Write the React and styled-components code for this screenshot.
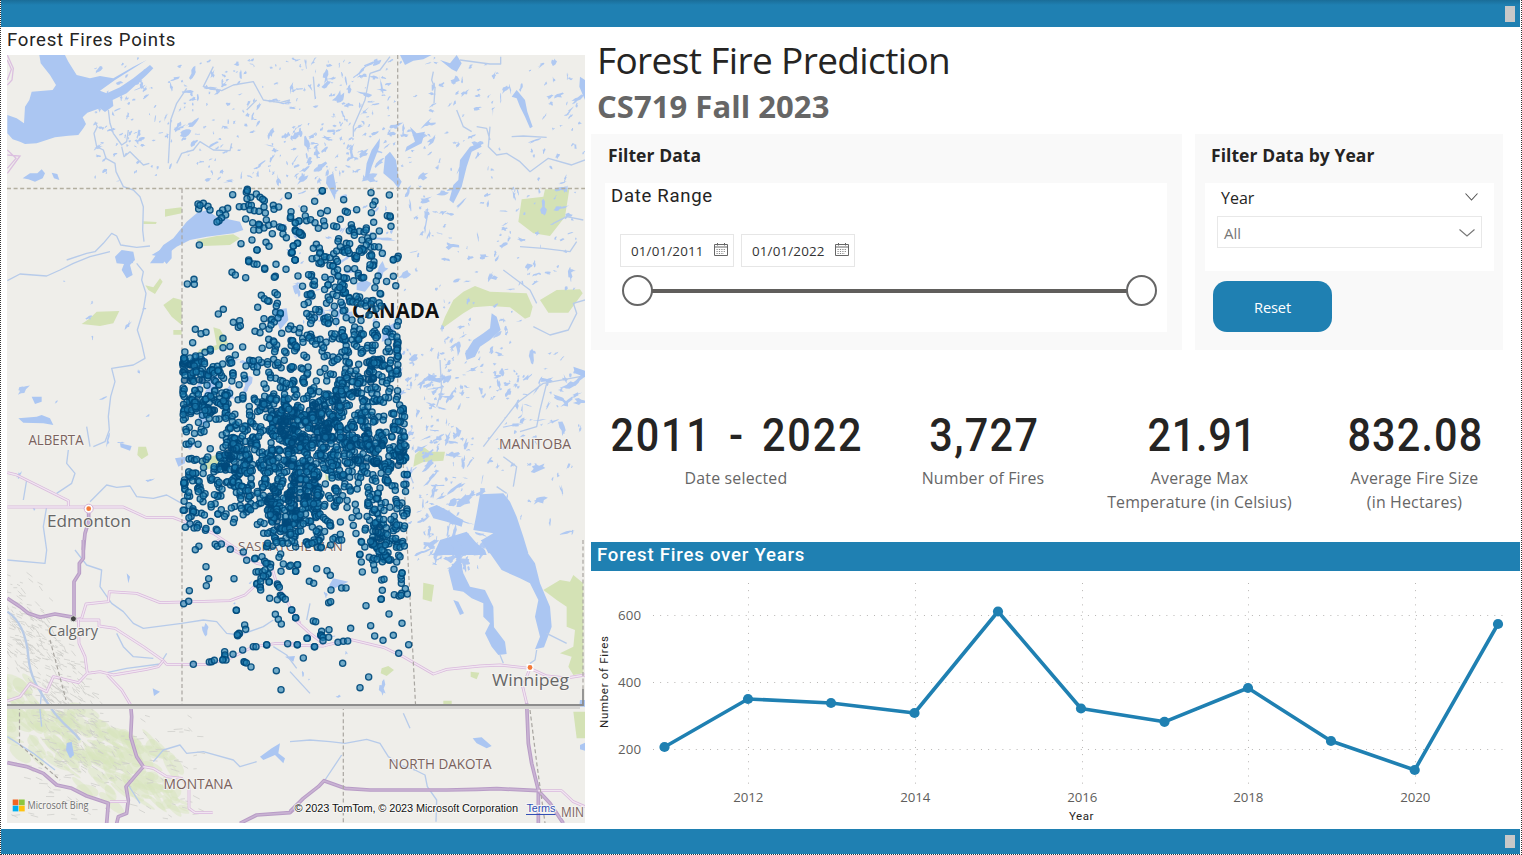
import React from "react";
import styled, { createGlobalStyle } from "styled-components";

const BLUE = "#1f80b2";
const SEGOE = '"Open Sans", "Noto Sans", sans-serif';
const DIN = 'Roboto, "Liberation Sans", sans-serif';

const GlobalStyle = createGlobalStyle`
  * { box-sizing: border-box; }
  body { margin: 0; background: #fff; overflow: hidden; }
`;

const Page = styled.div`
  width: 1522px;
  height: 855px;
  display: flex;
  flex-direction: column;
  padding-right: 1px;
  border-left: 1px dotted #333;
  border-right: 1px dotted #333;
  border-bottom: 1px dotted #333;
  background: #fff;
`;

const Bar = styled.div`
  flex: none;
  height: ${(p) => p.$height}px;
  padding: 6px 5px 0 0;
  display: flex;
  justify-content: flex-end;
  background: ${(p) => (p.$shaded ? `linear-gradient(#1a6d98, ${BLUE} 5px)` : BLUE)};
`;

const Handle = styled.span`
  width: 10px;
  height: ${(p) => p.$height}px;
  background: #c8c8c8;
`;

const Body = styled.main`
  flex: 1;
  min-height: 0;
  display: grid;
  grid-template-columns: 584px 929px;
  column-gap: 6px;
`;

const MapPanel = styled.section`
  padding-left: 6px;
  display: flex;
  flex-direction: column;
`;

const MapTitle = styled.h2`
  margin: 0;
  height: 28px;
  font: 400 18.6px/26px ${DIN};
  letter-spacing: 0.76px;
  color: #252423;
`;

const MapSvg = styled.svg`
  display: block;
  width: 578px;
  height: 768px;
`;

const Right = styled.section`
  display: flex;
  flex-direction: column;
`;

const Title = styled.h1`
  margin: 0;
  padding: 7px 0 0 6px;
  height: 55px;
  font: 400 37px/52px ${SEGOE};
  letter-spacing: -0.63px;
  color: #252423;
`;

const Subtitle = styled.p`
  margin: 0;
  padding-left: 6px;
  height: 52px;
  font: 700 31px/48px ${SEGOE};
  letter-spacing: 0.05px;
  color: #666;
`;

const Filters = styled.div`
  height: 216px;
  display: flex;
  gap: 13px;
`;

const Card = styled.div`
  width: ${(p) => p.$width}px;
  padding: 0 ${(p) => p.$padRight}px 0 ${(p) => p.$padLeft}px;
  background: #f9f9f9;
`;

const CardTitle = styled.h3`
  margin: 0;
  padding-left: ${(p) => p.$indent}px;
  height: 49px;
  font: 700 17.5px/43px ${SEGOE};
  letter-spacing: 0.06px;
  color: #252423;
`;

const Slicer = styled.div`
  height: ${(p) => p.$height}px;
  padding: ${(p) => p.$pad};
  background: #fff;
`;

const SlicerTitle = styled.div`
  height: 51px;
  font: 400 18.6px/26px ${DIN};
  letter-spacing: 0.68px;
  color: #252423;
`;

const DateRow = styled.div`
  display: flex;
  gap: 7px;
  padding-left: 9px;
`;

const DateInput = styled.div`
  width: 114px;
  height: 33px;
  padding: 1px 5px 0 10px;
  display: flex;
  justify-content: space-between;
  align-items: center;
  border: 1px solid #e6e6e6;
  font: 400 13.4px/34px ${SEGOE};
  letter-spacing: 0.15px;
  color: #333;
  svg { margin-bottom: 4px; }
`;

const Slider = styled.div`
  margin: 8px 0 0 11px;
  width: 535px;
  height: 31px;
  display: flex;
  align-items: center;
`;

const Knob = styled.span`
  width: 31px;
  height: 31px;
  border: 2.5px solid #666;
  border-radius: 50%;
  background: #fff;
`;

const Track = styled.span`
  flex: 1;
  height: 4px;
  margin: 0 -1px;
  background: #605e5c;
`;

const YearHead = styled.div`
  height: 33px;
  padding: 0 4px 0 4px;
  display: flex;
  align-items: center;
  justify-content: space-between;
  font: 400 16px/29px ${SEGOE};
  color: #252423;
  span { margin-bottom: 3px; }
  svg { margin-bottom: 6px; }
`;

const YearSelect = styled.div`
  height: 32px;
  padding: 2px 6px 0 6px;
  display: flex;
  align-items: center;
  justify-content: space-between;
  border: 1px solid #e8e8e8;
  font: 400 15px/29px ${SEGOE};
  color: #777;
  svg { margin-bottom: 1px; }
`;

const ResetButton = styled.button`
  display: block;
  margin: 10px 0 0 8px;
  padding: 1px 0 0;
  width: 119px;
  height: 51px;
  border: 0;
  border-radius: 14px;
  background: ${BLUE};
  color: #fff;
  font: 400 14.6px/50px ${SEGOE};
  letter-spacing: -0.1px;
`;

const Metrics = styled.div`
  height: 192px;
  padding-top: 58px;
  display: flex;
`;

const Metric = styled.div`
  width: ${(p) => p.$width}px;
  text-align: center;
`;

const MetricValue = styled.div`
  height: 58px;
  padding-left: ${(p) => p.$nudge || 2}px;
  font: 500 47px/54px ${DIN};
  letter-spacing: ${(p) => p.$track}px;
  word-spacing: ${(p) => p.$words || 0}px;
  transform: scaleX(0.88);
  color: #252423;
  white-space: nowrap;
`;

const MetricLabel = styled.div`
  font: 400 15.9px/24px ${SEGOE};
  letter-spacing: 0.18px;
  white-space: pre-line;
  color: #666;
`;

const ChartHeader = styled.h2`
  margin: 0;
  height: 29px;
  padding-left: 6px;
  background: ${BLUE};
  color: #fff;
  font: 500 18.6px/26px ${DIN};
  letter-spacing: 0.77px;
`;

const ChartSvg = styled.svg`
  display: block;
  width: 929px;
  height: 258px;
`;

/* ---------- map ---------- */

const makeRandom = (seed) => {
  let s = seed;
  return () => {
    s = (s * 1664525 + 1013904223) % 4294967296;
    return s / 4294967296;
  };
};

/* x0, y0, x1, y1, number of lakes, size */
const LAKE_REGIONS = [
  [92, 58, 185, 182, 90, 3],
  [180, 58, 300, 182, 130, 3],
  [292, 58, 397, 185, 170, 4],
  [400, 58, 584, 190, 110, 4],
  [400, 190, 584, 290, 95, 4],
  [400, 340, 460, 430, 60, 4],
  [440, 300, 520, 400, 75, 4],
  [500, 350, 584, 430, 55, 5],
  [405, 430, 475, 560, 110, 5],
  [430, 540, 490, 570, 30, 5],
  [480, 430, 584, 540, 35, 4],
  [280, 190, 400, 340, 60, 7],
  [200, 360, 290, 440, 14, 7],
  [15, 220, 175, 520, 18, 4],
  [200, 560, 400, 700, 10, 4],
];

const buildLakes = () => {
  const rnd = makeRandom(11);
  let d = "";
  LAKE_REGIONS.forEach(([x0, y0, x1, y1, count, size]) => {
    for (let i = 0; i < count; i += 1) {
      const cx = x0 + rnd() * (x1 - x0);
      const cy = y0 + rnd() * (y1 - y0);
      const long = 1.3 + rnd() * rnd() * size * 1.9;
      const thin = 0.6 + rnd() * long * 0.45;
      const angle = -0.8 + (rnd() - 0.5) * 2.2;
      const n = 11;
      for (let k = 0; k < n; k += 1) {
        const t = (k / n) * Math.PI * 2;
        const r = 0.3 + rnd() * 1.1;
        const u = Math.cos(t) * long * r;
        const v = Math.sin(t) * thin * r;
        const x = cx + u * Math.cos(angle) - v * Math.sin(angle);
        const y = cy + u * Math.sin(angle) + v * Math.cos(angle);
        d += `${k ? "L" : "M"}${x.toFixed(1)} ${y.toFixed(1)}`;
      }
      d += "Z";
    }
  });
  return d;
};

const buildTerrain = () => {
  const rnd = makeRandom(5);
  let d = "";
  for (let i = 0; i < 420; i += 1) {
    const t = rnd();
    const x = 7 + t * 85 + (rnd() - 0.5) * 50;
    const y = 590 + t * 150 + (rnd() - 0.4) * 70;
    d += `M${x.toFixed(1)} ${y.toFixed(1)}l${(2 + rnd() * 5).toFixed(1)} ${(rnd() * 6).toFixed(1)}`;
  }
  for (let i = 0; i < 130; i += 1) {
    const x = 10 + rnd() * 190;
    const y = 712 + rnd() * 108;
    d += `M${x.toFixed(1)} ${y.toFixed(1)}l${(3 + rnd() * 6).toFixed(1)} ${(rnd() * 5 - 1).toFixed(1)}`;
  }
  return d;
};

const buildWoods = () => {
  const rnd = makeRandom(29);
  const spots = [];
  for (let i = 0; i < 190; i += 1) {
    const t = rnd();
    spots.push({
      x: 4 + t * 165 + (rnd() - 0.5) * 60,
      y: 700 + t * 90 + (rnd() - 0.5) * 75,
      rx: 4 + rnd() * 13,
      ry: 1.5 + rnd() * 5,
      a: 15 + rnd() * 45,
    });
  }
  return spots.filter((s) => s.y > 709 || s.x < 40);
};

/* Fire positions, three units to a pixel, grouped by origin. */
const FIRE_GROUPS = [
  [0, 0, "742,568 739,577 742,572 698,584 769,582 752,592 741,596 780,592 793,602 788,598 594,612 610,610 596,627 600,616 624,619 630,630 683,625 668,630 659,640 677,645 665,653 657,662 651,666 718,620 732,620 746,616 754,616 750,629 763,632 777,634 792,621 796,639 820,616 822,628 836,621 865,587 873,635 871,655 872,650 886,667 897,663 737,657 758,668 799,660 778,675 779,676 776,673 761,690 777,690 792,684 806,676 821,672 839,681 849,685 845,683 849,702 859,713 817,701 886,691 897,700 756,720 723,731 798,727 807,739 771,750 598,735 893,730 880,738 876,758 746,780 886,780"],
  [290, 0, "97,573 97,572 74,604 161,599 243,578 298,585 255,604 249,615 42,627 46,648 92,640 112,632 166,634 172,637 200,629 244,638 292,647 301,652 300,648 303,679 27,663 16,669 50,662 62,659 75,668 85,685 101,663 104,677 131,678 140,680 151,658 184,674 186,684 186,688 178,692 193,697 193,706 208,694 222,696 229,684 228,690 251,667 268,693 16,690 17,694 33,700 37,706 33,704 28,697 22,730 10,738 5,758 15,780 79,733 70,745 88,744 89,760 80,774 103,770 120,773 131,761 140,753 146,716 144,724 151,740 163,750 169,730 179,731 172,745 178,760 164,757 174,752 200,770 216,720 233,714 249,709 236,724 242,742 253,740 266,741 229,735 213,745 215,757 222,751 218,748 245,767 277,760 322,775 208,752 310,780"],
  [0, 250, "771,0 876,7 885,30 747,35 746,34 762,42 771,43 794,58 794,55 828,43 858,58 826,79 823,82 696,67 706,75 737,83 582,88 562,102 583,103 784,136 793,146 807,154 803,152 825,128 832,134 832,160 829,168 773,172 827,187 841,192 841,189 655,192 670,178 792,206 813,211 815,208 823,216 834,204 700,217 719,212 715,232 721,227 788,229 807,237 813,225 765,244 780,248 845,250 872,228 866,237 897,248 586,238 603,251 618,247 578,278 669,265 669,293 631,303 615,307 631,298 728,291 706,315 600,318 587,318 570,324 552,325 806,268 820,273 808,286 830,285 824,305 822,276 854,304 878,272 885,285 884,302 890,290 749,331 760,333 772,350 738,348 821,328 833,338 803,335 803,343 875,350 668,342 690,340 695,338 655,363 654,362"],
  [0, 540, "586,29 618,80 626,116 619,137 568,152 551,191 566,184 664,12 691,28 730,36 740,61 766,55 764,56 786,50 794,64 803,70 812,73 811,82 798,70 702,116 709,211 709,211 734,255 737,268 718,281 717,280 713,287 712,284 842,42 837,52 850,72 868,79 893,74 887,94 843,94 803,103 804,101 768,96 775,95 788,95 797,110 808,125 807,126 783,115 790,108 772,130 770,132 781,142 780,140 782,150 832,132 834,136 838,142 841,166 844,168 848,172 856,178 832,179 809,175 875,210 887,233 826,223 835,238 844,252 580,373 628,366 635,365 643,361 674,335 674,349 675,345 670,358 678,360 668,360 699,343 728,330 760,320 768,320 800,315 800,314 863,311 892,314 732,365 734,367 739,369 753,381 829,392 843,449 802,18 803,16 800,20 803,10 848,10 864,10 782,125 795,90"],
  [290, 540, "209,44 210,43 214,66 217,96 2,76 22,74 17,94 80,86 111,92 121,106 58,124 71,130 123,150 155,144 168,144 116,188 122,185 228,197 297,222 336,250 242,257 254,288 279,301 310,286 356,314 326,340 182,265 117,269 70,243 77,245 5,210 17,233 95,274 93,286 92,285 95,288 99,292 99,302 116,292 52,295 51,295 22,314 73,320 74,320 40,354 158,370 144,307 160,304 173,303 236,411 210,443 274,177 273,178 277,151 275,120 282,118 313,164 327,168 335,160 333,166 352,162 346,146 334,130 334,118 333,108 336,98 336,100 312,88 320,66 254,90 251,74 251,55 261,58 277,65 280,50 290,52 296,58 286,46 267,35 282,35 276,30 330,22 343,18 286,15 94,22 54,14 66,10 155,0"],
];

/* Fires per 12px cell, from (180, 250). */
const FIRE_DENSITY = [
  "0000000001022332211",
  "0000000000034221200",
  "0000000001334532230",
  "0000000000424540300",
  "0000000000233253300",
  "0000000000326333101",
  "0000000002101333431",
  "0000000004544552335",
  "1000101112223333433",
  "8842223133303337743",
  "7953421424424467344",
  "3434200442334674231",
  "6666133564358744523",
  "6676443799998535335",
  "2222553699999555444",
  "1213563589997567635",
  "3113775569965678858",
  "2326776649866557757",
  "5447854549565535443",
  "5535653659675242452",
  "4324264848783213531",
  "3533263869664422525",
  "3212212689554132642",
  "1222001476052112752",
  "0111000433342103864",
  "0000000000000000452",
];

const buildFires = () => {
  const rnd = makeRandom(77);
  const fires = [];
  FIRE_DENSITY.forEach((row, r) => {
    [...row].forEach((ch, c) => {
      const v = Number(ch);
      const count = v < 5 ? v : Math.round(v * 1.6);
      let px = 0;
      let py = 0;
      for (let i = 0; i < count; i += 1) {
        if (i > 0 && rnd() < 0.5) {
          px += (rnd() - 0.5) * 7;
          py += (rnd() - 0.5) * 7;
        } else {
          px = 180 + (c + rnd()) * 12;
          py = 250 + (r + rnd()) * 12;
        }
        const limit = (py < 400 ? 396 : 398 + Math.min(9, (py - 400) / 10 + 3)) + rnd() * 2.5;
        const x = Math.min(limit, Math.max(182.5 + rnd() * 3, px));
        const dark = v > 6 && rnd() < 0.4;
        const overLabel = x > 349 && x < 392 && py > 303 && py < 321;
        if (!overLabel) fires.push([x, py, dark]);
      }
    });
  });
  [[357, 303], [361, 304], [366, 306], [371, 304], [376, 309], [381, 306], [352, 320], [361, 320.500], [369, 315]].forEach(
    ([x, y]) => fires.push([x, y, false])
  );
  FIRE_GROUPS.forEach(([ox, oy, text]) => {
    text.split(" ").forEach((pair) => {
      const [x, y] = pair.split(",").map(Number);
      fires.push([ox + x / 3, oy + y / 3, false]);
    });
  });
  return fires;
};

const LAKES = buildLakes();
const TERRAIN = buildTerrain();
const WOODS = buildWoods();
const FIRES = buildFires();

const Tile = ({ x, y, children }) => (
  <g transform={`translate(${x} ${y}) scale(0.33333)`}>{children}</g>
);

const Road = ({ d, major }) => (
  <g fill="none" strokeLinejoin="round">
    <path d={d} stroke={major ? "#b89cc6" : "#d9b9dc"} strokeWidth={major ? 11 : 8.5} />
    <path d={d} stroke={major ? "#c9b3d3" : "#f1e6f1"} strokeWidth={major ? 5 : 4} />
  </g>
);

const Rivers = ({ d }) => <path d={d} fill="none" stroke="#b7cbea" strokeWidth="4" strokeLinejoin="round" />;

const MapLabel = ({ x, y, w, size, weight = 400, fill = "#7a625e", children }) => (
  <text
    x={x} y={y} textLength={w} lengthAdjust="spacingAndGlyphs" fontSize={size} fontWeight={weight}
    fill={fill} stroke="#f4f3f0" strokeWidth="2" paintOrder="stroke" fontFamily={SEGOE}
  >
    {children}
  </text>
);

const FireMap = () => (
  <MapSvg viewBox="7 55 578 768">
    <rect x="7" y="55" width="578" height="768" fill="#efeeea" />

    <g fill="#d7e4bd">
      {WOODS.map((s, i) => (
        <ellipse key={i} cx={s.x} cy={s.y} rx={s.rx} ry={s.ry} opacity="0.45" transform={`rotate(${s.a} ${s.x} ${s.y})`} />
      ))}
    </g>
    <g fill="#d4e2b5">
      <Tile x={290} y={0}><path d="M695 598L760 590 765 568H838L825 650 780 708 730 700 685 665Z" /></Tile>
      <Tile x={290} y={250}>
        <path d="M450 240L465 200 490 150 520 125 555 108 600 125 710 130 728 170 720 200 705 206 660 172 600 168 550 172 520 190ZM750 150L800 120 870 118 878 130 835 188 775 188ZM370 650L375 615 400 590 420 605 465 605 460 632 400 636ZM105 670L125 690 108 692Z" />
      </Tile>
      <Tile x={0} y={250}>
        <path d="M245 222L270 205 290 185 358 183 340 220 300 228ZM490 165L520 143 545 150V225L515 200ZM436 106L460 112 480 85 488 95 465 132 445 120ZM520 240H545V254H520ZM640 232L660 238 685 280 650 300 590 310 600 298 650 285ZM415 590L438 590 445 615 425 628 412 615ZM600 630L680 605 660 650 610 660Z" />
      </Tile>
      <Tile x={0} y={0}>
        <path d="M590 720L650 708 700 703 720 715 690 735 610 738ZM495 628L545 622V640L495 650ZM430 664L470 666 468 672 430 672Z" />
      </Tile>
      <Tile x={290} y={540}>
        <path d="M400 128L432 135 425 185 398 178ZM275 385L295 378 312 390 290 408 272 400ZM760 150L810 120 840 125 850 105 880 130V400L850 405 835 380 845 350 810 340 850 320 855 270 830 260 830 200 800 180ZM542 395L568 398 560 418 542 410ZM850 515H885V595H860ZM460 482H485V492H460Z" />
      </Tile>
    </g>
    <path d={TERRAIN} stroke="#cfcfca" strokeWidth="0.9" fill="none" opacity="0.85" />

    <path d={LAKES} fill="#b0c9f2" />
    <g fill="#abc6f2">
      <Tile x={0} y={0}>
        <path d="M118 165L122 190 150 225 168 255 158 270 95 275 88 300 75 320 72 370 50 355 22 345V400L38 418 60 425 75 432 110 430 165 412 205 407 235 405 250 385 258 372 248 352 262 338 300 325 315 336 340 318 338 300 380 280 440 225 460 205 450 195 400 235 360 262 320 280 300 272 345 240 440 180 400 200 340 235 300 228 270 235 230 225 205 185 195 165Z" />
        <path d="M450 790L490 735 520 715 560 665 590 640 620 630 650 650 720 665 730 690 700 700 620 710 570 720 530 740 505 760 490 790ZM68 535L90 520 112 520 125 508 135 520 128 535 105 545 85 538ZM155 518L172 522 178 540 162 535ZM350 780L365 760 380 755 400 790Z" />
      </Tile>
      <Tile x={0} y={250}>
        <path d="M345 20L365 0 400 5 405 30 390 45 398 75 380 85 365 60 372 42 350 40ZM455 15L480 0 515 0 515 25 500 42 480 20ZM55 505L110 500 125 495 150 505 160 525 130 520 70 518ZM95 440L125 440 125 455 105 462ZM360 580L395 588 390 602 362 592ZM560 570L585 580 570 600 558 590ZM525 625L555 620 555 640 535 650ZM820 180L860 175 865 210 840 240ZM670 430L690 405 700 440 680 455Z" />
      </Tile>
      <Tile x={290} y={0}>
        <path d="M330 165H425L400 178 370 182 345 195ZM450 180L480 190 500 165 515 190 500 215 485 208ZM285 470L300 455 318 480 325 530 335 545 325 565 310 545 280 520ZM540 440L570 430 575 440 545 455 530 500 515 560 490 610 478 600 490 555 505 540 510 480ZM680 295L690 320 705 350 720 385 728 380 712 335 705 300 680 270 665 290ZM225 530L230 490 245 450 270 415 268 440 245 500 235 535ZM360 380L380 400 405 395 395 430 345 455 350 440 375 425ZM110 530L130 520 138 560 135 600 120 570 108 550ZM870 230L885 240V300L868 260Z" />
      </Tile>
      <Tile x={290} y={250}>
        <path d="M570 733L640 730 660 755 680 800 700 860 715 910 595 910 575 870 610 850 550 840 560 790ZM415 775L440 765 480 785 500 800 520 810 515 830 470 815 430 805ZM450 870L530 845 560 880 585 900 590 915H430ZM605 190L620 200 632 240 600 270 570 290 555 320 530 330 525 310 550 270 580 250 600 235ZM200 100L225 90 245 100 225 125 200 120ZM280 240L325 210 300 270 275 275ZM75 560L100 560 85 590ZM415 370L440 385 470 380 450 398 415 390ZM850 350L885 362V382L855 370Z" />
      </Tile>
      <Tile x={290} y={540}>
        <path d="M572 0L600 40 635 90 690 115 720 130 745 180 735 230 750 290 735 328 762 322 785 260 780 200 750 130 735 70 700 20 695 0ZM465 0L490 20 500 60 475 90 490 150 520 155 545 175 580 190 580 230 600 250 585 280 605 320 625 345 650 342 645 305 612 262 610 200 585 150 540 140 520 100 510 55 520 25 500 0ZM490 180L505 185 522 220 510 225ZM118 135L130 115 175 125 150 138 120 150ZM870 480H885V500L868 500ZM870 615L885 608V632L870 628ZM548 595L575 592 605 618 590 625 560 610Z" />
      </Tile>
      <Tile x={0} y={540}>
        <path d="M200 610L215 605 222 645 210 655 198 630ZM780 650L815 625 840 610 835 640 855 655 850 670 825 645 790 660ZM855 350L885 348 880 365ZM380 100L390 110 385 130ZM458 445L480 455 462 468Z" />
      </Tile>
    </g>

    <Tile x={0} y={0}>
      <Rivers d="M285 365L292 380 282 400 290 440 310 450 318 475 345 490 348 515 370 560 400 570 420 590 430 620 428 690 432 725 M325 330L330 370 340 400 365 435 380 425 385 390 M365 440L372 470 390 455 430 495 448 490 M560 265L530 310 512 360 505 490 M640 200L610 260 665 272 700 255 760 245 790 300 840 308 870 300 M740 330L770 300 M530 490L545 460 580 450 600 425 640 450 690 452 695 430 M200 780L260 760 285 755 310 730 335 700 350 708 362 735 410 742 450 738" />
    </Tile>
    <Tile x={290} y={0}>
      <Rivers d="M430 215L425 240 435 265 432 310 M510 180L600 192 632 192 632 170 M500 330L520 380 545 395 M600 380L595 440 620 465 650 460 690 485 720 515 775 475 845 495 885 480 M665 410L700 408 770 412 M690 740L760 745 840 755 860 725 M70 230L75 290 M240 220L225 300 190 380 190 410 M790 670L830 650 880 660 M560 380L590 385 600 420 M300 170L270 210 240 220" />
    </Tile>
    <Tile x={0} y={250}>
      <Rivers d="M22 92L60 72 140 78 180 60 220 40 270 20 330 5 M410 40L430 65 425 90 438 130 430 180 412 240 425 280 435 325 400 345 335 355 345 395 332 440 325 500 328 540 315 575 280 590 M270 755L320 705 350 712 390 708 410 740 460 745 500 735 545 760 M205 600L200 640 225 670 215 700 170 730 M140 770L130 830 140 900 M80 690L70 750 M260 530L270 590" />
    </Tile>
    <Tile x={290} y={250}>
      <Rivers d="M640 60L720 120 740 160 M730 230L780 255 835 240 860 190 850 160 885 150 M450 330L455 420 440 470 M770 400L750 480 740 530 690 545 M580 590L680 460 760 400 870 380 M620 710L650 730 M640 620L680 650 670 710 M350 650L370 700" />
    </Tile>
    <Tile x={0} y={540}>
      <Rivers d="M140 30L135 70 22 60 M225 30L260 75 305 90 300 140 335 190 370 215 400 250 430 265 545 250 610 240 650 245 680 280 720 285 790 260 820 240 M350 280L370 320 400 350 460 355 M310 400L380 385 480 372 500 340 M460 665L490 630 540 615 560 640 610 635 700 660 720 680 770 665 M22 590L100 640 165 690 M125 450L120 510 125 560 M385 735L420 790 M820 320L860 345 890 385" />
      <path d="M22 215C60 240 80 290 85 350S110 440 150 500 210 560 240 600" stroke="#b9cbe6" strokeWidth="7" fill="none" />
    </Tile>
    <Tile x={290} y={540}>
      <Rivers d="M0 605L60 600 120 605 165 610 230 598 270 610 295 650 330 675 375 690 405 705 412 740 440 780 438 845 M155 645L105 720 M340 520L360 565 M0 395L60 460 M60 190L50 240 M630 345L640 370 M740 330L735 360 720 370 M770 280L830 310" />
    </Tile>

    <Tile x={0} y={0}>
      <path d="M22 165L40 205 36 240 22 255M22 180L34 208 22 240M22 450L48 475 22 505M22 465L60 468 22 520" fill="none" stroke="#dcc0e0" strokeWidth="4" />
    </Tile>
    <Tile x={0} y={250}>
      <Road d="M22 668L50 675 205 752 205 768M22 771H370L440 803H520L560 818" />
      <Road d="M560 818L640 850 700 890 740 915" />
      <Road major d="M266 775V815L255 850 250 900" />
    </Tile>
    <Tile x={0} y={540}>
      <Road major d="M250 0V55L238 70 238 100 222 125V235" />
      <Road major d="M22 175L60 200 85 220 120 232 165 222 222 232" />
      <Road d="M222 240L245 235 258 192 325 185 328 155 410 160 480 188 690 182 735 165 770 132 800 105" />
      <Road d="M222 240H297V258L345 265 430 320 490 362 500 373H620L690 355 760 320 830 310 900 312" />
      <Road d="M235 240L237 310 255 350 262 400 300 395 340 405 440 388 475 380 490 362M262 400L235 428 160 410 140 455 90 430 60 470 22 483" />
      <Road d="M322 405L365 450 392 495" />
      <Road major d="M392 495L395 530 392 590 410 650 430 680 378 740 385 780 380 820 355 830 350 850M22 668L80 680 130 700 170 735 215 745 260 768 325 790 320 850" />
      <Road d="M430 680L460 685 500 710 545 715 567 745V805L585 818H638M330 785H380M650 0L700 30 770 70 815 80 830 130 870 200 900 250" />
      <Road major d="M720 850L770 825 870 818 900 790" />
    </Tile>
    <Tile x={290} y={540}>
      <Road d="M0 315L100 318 180 298 280 322 340 350 430 402 470 388 570 378 630 375 720 385 770 408 830 414 885 405M10 235L60 280 110 318" />
      <Road d="M720 385L698 440 710 490" />
      <Road major d="M710 490L715 610 725 670 745 750V850M0 815L40 775 85 740 102 722 165 745 240 750H470L560 748 620 746 745 752" />
      <Road major d="M745 752L780 790 820 850" />
      <Road d="M745 752H815L850 785 885 800" />
    </Tile>

    <g fill="none" stroke="#a9a6a1" strokeWidth="1.2" strokeDasharray="4 2.6">
      <path d="M7 188.5H585" stroke="#b3afa0" strokeWidth="1.5" />
      <path d="M182 189V704M397.7 55V395L403 460 408 560 415.500 704M343.300 706V823M583 540V690M19.500 706V745" />
      <path d="M530 710L537 765 545 823M20 745L60 780M50 640L66 700" />
    </g>
    <path d="M7 707H580" stroke="#d5d4d2" strokeWidth="4" />
    <path d="M7 705H583V689" fill="none" stroke="#8c8c8c" strokeWidth="1.8" />

    <MapLabel x={28.500} y={444.500} w={55} size={14}>ALBERTA</MapLabel>
    <MapLabel x={499} y={449} w={72} size={14}>MANITOBA</MapLabel>
    <MapLabel x={238} y={551} w={105} size={13.500}>SASKATCHEWAN</MapLabel>
    <MapLabel x={163.500} y={788.500} w={69} size={14}>MONTANA</MapLabel>
    <MapLabel x={388.500} y={769} w={103} size={14}>NORTH DAKOTA</MapLabel>
    <MapLabel x={561} y={817} w={23} size={14}>MIN</MapLabel>
    <MapLabel x={352} y={317.500} w={87} size={21} weight={700} fill="#111">CANADA</MapLabel>
    <circle cx="88.700" cy="508.700" r="4.500" fill="#fff" stroke="#d2b3d8" />
    <circle cx="88.700" cy="508.700" r="2.400" fill="#f37a3a" />
    <rect x="526.500" y="664" width="7" height="7" fill="#fff" />
    <circle cx="530" cy="667.500" r="2.400" fill="#f37a3a" />
    <circle cx="73.400" cy="618.800" r="3" fill="#444" stroke="#ddd" />
    <MapLabel x={47} y={527} w={84} size={16.500} fill="#666">Edmonton</MapLabel>
    <MapLabel x={48} y={635.500} w={50} size={14.500} fill="#666">Calgary</MapLabel>
    <MapLabel x={492} y={686} w={77} size={17} fill="#666">Winnipeg</MapLabel>

    <g fill="#1f80b2" fillOpacity="0.6" stroke="#004a7c" strokeOpacity="0.92" strokeWidth="1.300">
      {FIRES.map(([x, y, dark], i) => (
        <circle key={i} cx={x} cy={y} r="3.100" fill={dark ? "#004a7c" : undefined} />
      ))}
    </g>

    <rect x="12.700" y="799.500" width="5.700" height="5.700" fill="#f26522" />
    <rect x="19" y="799.500" width="5.700" height="5.700" fill="#8dc63f" />
    <rect x="12.700" y="805.700" width="5.700" height="5.700" fill="#00aeef" />
    <rect x="19" y="805.700" width="5.700" height="5.700" fill="#ffc20e" />
    <MapLabel x={27.500} y={809.300} w={61} size={10.500} fill="#6f6f6f">Microsoft Bing</MapLabel>
    <g fontFamily="Liberation Sans, sans-serif" fontSize="11" stroke="#f7f7f5" strokeWidth="2" paintOrder="stroke">
      <text x="294.500" y="812" textLength="223.500" fill="#111">© 2023 TomTom, © 2023 Microsoft Corporation</text>
      <text x="526.500" y="812" textLength="29" fill="#3350b5">Terms</text>
    </g>
    <path d="M526 814.500H555.500" stroke="#3350b5" />
  </MapSvg>
);

/* ---------- icons ---------- */

const CalendarIcon = () => (
  <svg width="14" height="13" viewBox="0 0 14 13" fill="none" stroke="#666">
    <path d="M0.500 1.500H13.500V12.500H0.500ZM0.500 4H13.500M3.500 0V2.500M10.500 0V2.500" />
    <path d="M2.500 6.500H12M2.500 8.500H12M2.500 10.500H10" strokeDasharray="1.200 1.200" strokeOpacity="0.8" />
  </svg>
);

const Chevron = ({ width, color }) => (
  <svg width={width} height="8" viewBox={`0 0 ${width} 8`} fill="none" stroke={color} strokeWidth="1.100">
    <path d={`M0.500 0.500L${width / 2} 7L${width - 0.5} 0.500`} />
  </svg>
);

/* ---------- chart ---------- */

const POINTS = [
  [664.5, 747], [748, 699], [831, 703], [914.5, 713], [998, 611.5], [1081, 708.5],
  [1164.5, 721.8], [1248, 688], [1331, 741], [1414.700, 770], [1498, 624],
];
const X_TICKS = [[2012, 748.5], [2014, 915.5], [2016, 1082.5], [2018, 1248.500], [2020, 1415.5]];
const Y_TICKS = [[600, 615.500], [400, 682.500], [200, 749.500]];

const FiresChart = () => (
  <ChartSvg viewBox="591 571 929 258" fontFamily={SEGOE}>
    <g stroke="#b8b6b4" strokeWidth="1" strokeDasharray="1 6.130">
      {Y_TICKS.map(([v, y]) => <path key={v} d={`M653 ${y}H1508`} />)}
      {X_TICKS.map(([v, x]) => <path key={v} d={`M${x} 583V786`} />)}
    </g>
    <polyline points={POINTS.join(" ")} fill="none" stroke={BLUE} strokeWidth="3.600" strokeLinejoin="round" />
    {POINTS.map(([x, y]) => <circle key={x} cx={x} cy={y} r="5.100" fill={BLUE} />)}
    <g fill="#605e5c" fontSize="13.300">
      {Y_TICKS.map(([v, y]) => <text key={v} x="618" y={y + 4.500} textLength="23">{v}</text>)}
      {X_TICKS.map(([v, x]) => <text key={v} x={x - 15.2} y="801.800" textLength="30">{v}</text>)}
    </g>
    <g fill="#252423" fontFamily={DIN} fontSize="11.500">
      <text x="1069" y="819.500" textLength="24.500">Year</text>
      <text transform="translate(608 728) rotate(-90)" textLength="92">Number of Fires</text>
    </g>
  </ChartSvg>
);

const METRICS = [
  { value: "2011 - 2022", label: "Date selected", width: 290, track: 2, words: 6 },
  { value: "3,727", label: "Number of Fires", width: 204, track: 1.5, nudge: 3 },
  { value: "21.91", label: "Average Max\nTemperature (in Celsius)", width: 229, track: 0.8, nudge: 6 },
  { value: "832.08", label: "Average Fire Size\n(in Hectares)", width: 201, track: 1.3 },
];

export default function App() {
  return (
    <Page>
      <GlobalStyle />
      <Bar $height={27} $shaded><Handle $height={16} /></Bar>
      <Body>
        <MapPanel>
          <MapTitle>Forest Fires Points</MapTitle>
          <FireMap />
        </MapPanel>
        <Right>
          <Title>Forest Fire Prediction</Title>
          <Subtitle>CS719 Fall 2023</Subtitle>
          <Filters>
            <Card $width={591} $padLeft={14} $padRight={15}>
              <CardTitle $indent={3}>Filter Data</CardTitle>
              <Slicer $height={149} $pad="0 0 0 6px">
                <SlicerTitle>Date Range</SlicerTitle>
                <DateRow>
                  <DateInput>01/01/2011<CalendarIcon /></DateInput>
                  <DateInput>01/01/2022<CalendarIcon /></DateInput>
                </DateRow>
                <Slider><Knob /><Track /><Knob /></Slider>
              </Slicer>
            </Card>
            <Card $width={308} $padLeft={10} $padRight={9}>
              <CardTitle $indent={6}>Filter Data by Year</CardTitle>
              <Slicer $height={88} $pad="0 12px 0 12px">
                <YearHead><span>Year</span><Chevron width={13} color="#555" /></YearHead>
                <YearSelect>All<Chevron width={16} color="#777" /></YearSelect>
              </Slicer>
              <ResetButton>Reset</ResetButton>
            </Card>
          </Filters>
          <Metrics>
            {METRICS.map((m) => (
              <Metric key={m.value} $width={m.width}>
                <MetricValue $track={m.track} $words={m.words} $nudge={m.nudge}>{m.value}</MetricValue>
                <MetricLabel>{m.label}</MetricLabel>
              </Metric>
            ))}
          </Metrics>
          <ChartHeader>Forest Fires over Years</ChartHeader>
          <FiresChart />
        </Right>
      </Body>
      <Bar $height={25}><Handle $height={13} /></Bar>
    </Page>
  );
}
